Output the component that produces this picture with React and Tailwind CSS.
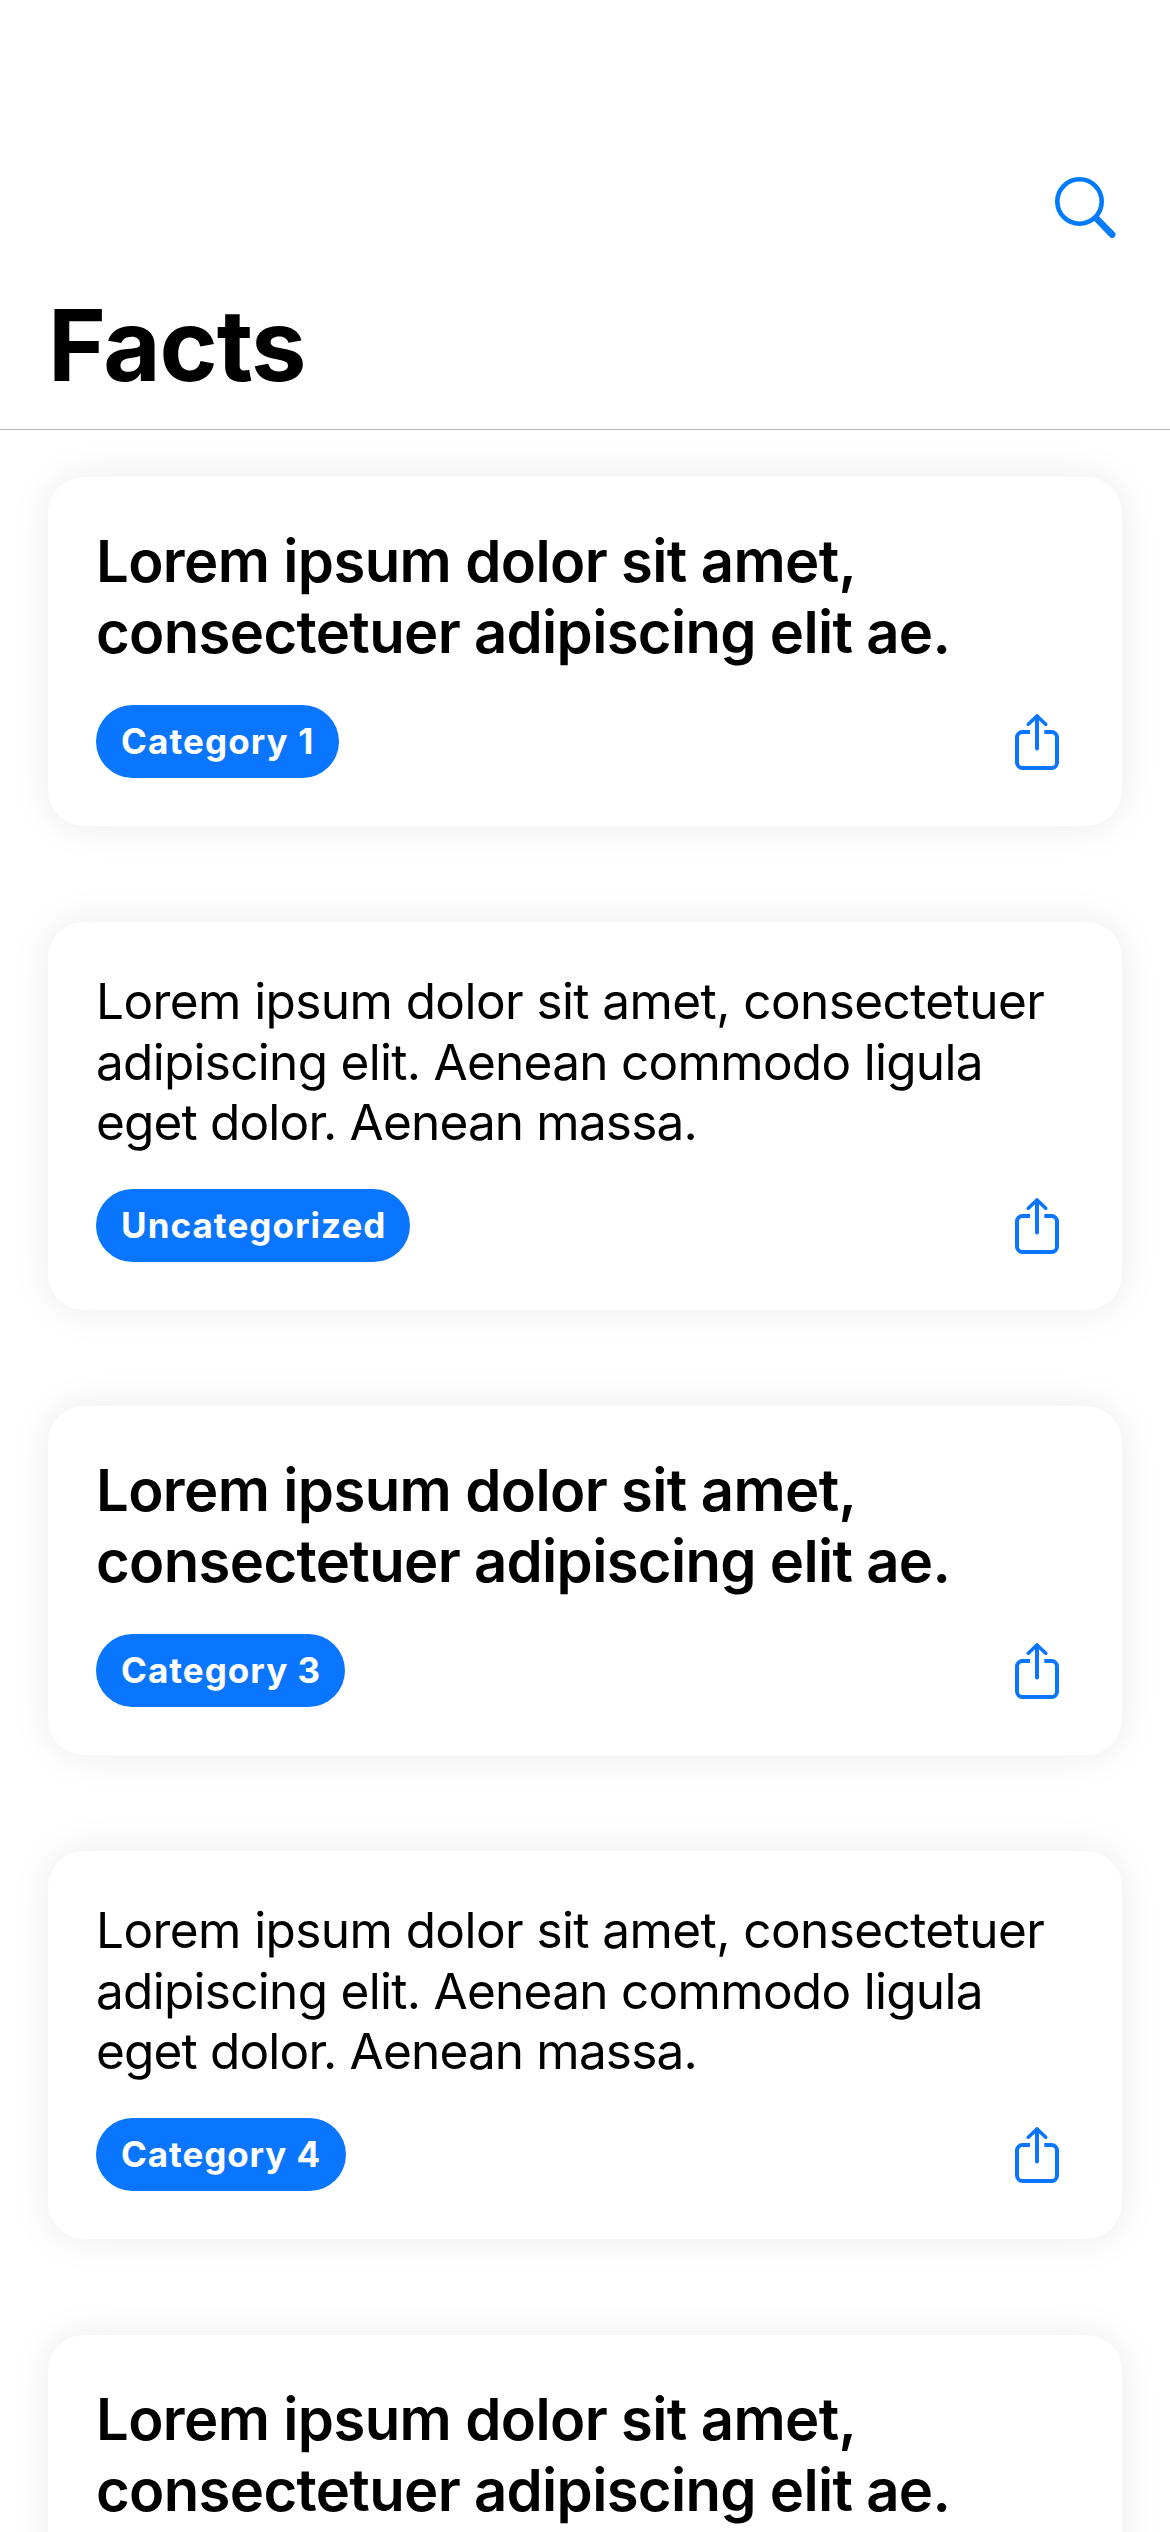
import React from "react";

const headline = {
  className: "h-[179px] pt-px text-[58px] leading-[71px] font-semibold",
  lines: [
    { text: "Lorem ipsum dolor sit amet,", tracking: "tracking-[-0.62px]" },
    { text: "consectetuer adipiscing elit ae.", tracking: "tracking-[-0.67px]" },
  ],
};

const body = {
  className: "h-[218px] pt-px text-[49.5px] leading-[60.5px] font-normal",
  lines: [
    { text: "Lorem ipsum dolor sit amet, consectetuer", tracking: "tracking-[-0.58px]" },
    { text: "adipiscing elit. Aenean commodo ligula", tracking: "tracking-[-0.71px]" },
    { text: "eget dolor. Aenean massa.", tracking: "tracking-[-0.83px]" },
  ],
};

const facts = [
  { id: 1, copy: headline, category: "Category 1", chip: "w-[243px] tracking-[1.1px]" },
  { id: 2, copy: body, category: "Uncategorized", chip: "w-[314px] tracking-[1.05px]" },
  { id: 3, copy: headline, category: "Category 3", chip: "w-[249px] tracking-[1.03px]" },
  { id: 4, copy: body, category: "Category 4", chip: "w-[250px] tracking-[0.9px]" },
  { id: 5, copy: headline },
];

function SearchIcon() {
  return (
    <svg width="61" height="61" viewBox="0 0 61 61" fill="none" stroke="currentColor">
      <circle cx="24.5" cy="24.5" r="22.2" strokeWidth="4.6" />
      <path d="M41.5 41.5 57.2 57.6" strokeWidth="6.6" strokeLinecap="round" />
    </svg>
  );
}

function ShareIcon() {
  return (
    <svg width="44" height="56" viewBox="0 0 44 56" fill="none" stroke="currentColor" strokeWidth="4">
      <path d="M15 18H7.5A5.5 5.5 0 0 0 2 23.5V48.5A5.5 5.5 0 0 0 7.5 54H36.5A5.5 5.5 0 0 0 42 48.5V23.5A5.5 5.5 0 0 0 36.5 18H29.3" />
      <path d="M22 2.5V34.5" strokeLinecap="round" />
      <path d="M13.3 10.2 22 2 30.7 10.2" strokeWidth="3.6" strokeLinecap="round" strokeLinejoin="round" />
    </svg>
  );
}

function FactCard({ copy, category, chip }) {
  return (
    <article className="shrink-0 rounded-[36px] bg-white p-12 shadow-[0_0_40px_rgba(0,0,0,0.08)]">
      <p className={copy.className}>
        {copy.lines.map((line) => (
          <span key={line.text} className={`block whitespace-nowrap ${line.tracking}`}>
            {line.text}
          </span>
        ))}
      </p>
      {category && (
        <div className="mt-px flex h-[73px] items-start justify-between">
          <span
            className={`flex h-[73px] items-center rounded-full bg-[#0a75ff] pl-[25px] text-[35px] leading-none font-bold whitespace-nowrap text-white ${chip}`}
          >
            {category}
          </span>
          <button className="mt-[9px] mr-[15px] text-[#0a75ff]" aria-label="Share">
            <ShareIcon />
          </button>
        </div>
      )}
    </article>
  );
}

export default function App() {
  return (
    <div className="flex h-[2532px] w-[1170px] flex-col overflow-hidden bg-white font-[Inter,sans-serif] text-black">
      <header className="z-10 flex h-[430px] shrink-0 flex-col border-b border-[#b3b3b3] bg-white pt-[177px] pr-[54px] pl-12">
        <button className="self-end text-[#007aff]" aria-label="Search">
          <SearchIcon />
        </button>
        <h1 className="mt-[47px] text-[99px] leading-[120px] font-bold tracking-[-1.17px]">Facts</h1>
      </header>
      <main className="flex flex-col gap-24 px-12 pt-[47px]">
        {facts.map((fact) => (
          <FactCard key={fact.id} {...fact} />
        ))}
      </main>
    </div>
  );
}
